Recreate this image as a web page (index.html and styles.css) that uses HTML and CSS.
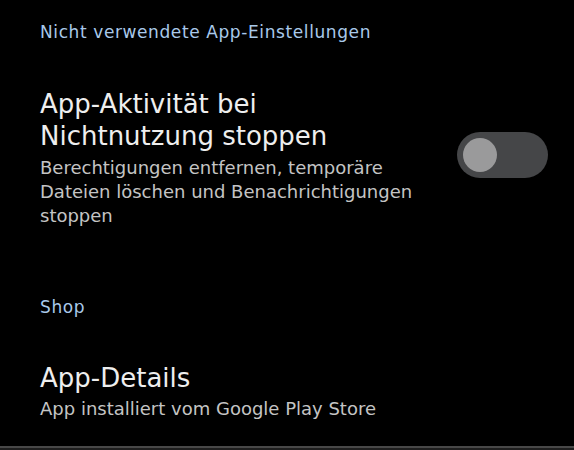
FILE: index.html
```html
<!DOCTYPE html>
<html lang="de">
<head>
<meta charset="utf-8">
<link rel="stylesheet" href="styles.css">
</head>
<body>
<div class="screen">
  <div class="section-header first">Nicht verwendete App-Einstellungen</div>
  <div class="row toggle-row">
    <div class="texts">
      <div class="title">App-Aktivität bei<br>Nichtnutzung stoppen</div>
      <div class="summary">Berechtigungen entfernen, temporäre Dateien löschen und Benachrichtigungen stoppen</div>
    </div>
    <div class="switch"><div class="knob"></div></div>
  </div>
  <div class="section-header shop">Shop</div>
  <div class="row details-row">
    <div class="texts">
      <div class="title">App-Details</div>
      <div class="summary">App installiert vom Google Play Store</div>
    </div>
  </div>
  <div class="bottom-bar"></div>
</div>
</body>
</html>
```
FILE: styles.css
```css
html, body {
  margin: 0;
  padding: 0;
  background: #000;
}
.screen {
  width: 574px;
  height: 450px;
  background: #000;
  font-family: "DejaVu Sans", "Open Sans", sans-serif;
  display: flex;
  flex-direction: column;
  overflow: hidden;
  position: relative;
}
.section-header {
  color: #a9c9ea;
  font-size: 17px;
  letter-spacing: 0.6px;
  line-height: 24px;
  padding-left: 40px;
}
.section-header.first {
  margin-top: 20px;
}
.section-header.shop {
  margin-top: 67px;
}
.row {
  display: flex;
  align-items: center;
  padding: 0 26px 0 40px;
}
.toggle-row {
  margin-top: 44px;
}
.details-row {
  margin-top: 43px;
}
.texts {
  flex: 1;
}
.title {
  color: #eeeeee;
  font-size: 26px;
  line-height: 32px;
}
.summary {
  color: #c4c4c4;
  font-size: 18px;
  line-height: 24px;
  width: 390px;
  margin-top: 4px;
}
.details-row .summary {
  margin-top: 3px;
}
.switch {
  width: 91px;
  height: 46px;
  border-radius: 23px;
  background: #454648;
  display: flex;
  align-items: center;
  padding-left: 6px;
  box-sizing: border-box;
  margin-top: -6px;
  flex-shrink: 0;
}
.knob {
  width: 34px;
  height: 34px;
  border-radius: 50%;
  background: #9a9a9b;
}
.bottom-bar {
  position: absolute;
  left: 0;
  right: 0;
  bottom: 0;
  height: 2px;
  background: #484848;
  border-bottom: 2px solid #1e1e1e;
}
```
